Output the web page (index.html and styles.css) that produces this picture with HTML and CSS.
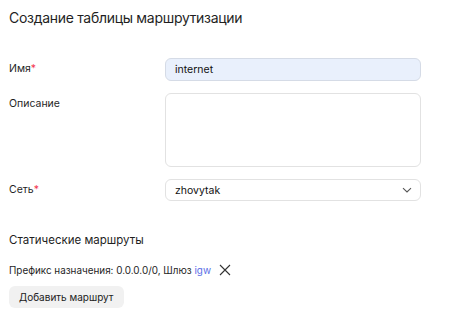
FILE: index.html
```html
<!DOCTYPE html>
<html lang="ru">
<head>
    <meta charset="UTF-8">
    <title>Создание таблицы маршрутизации</title>
    <link rel="stylesheet" href="styles.css">
</head>
<body>
    <div class="page">
        <h2 class="title">Создание таблицы маршрутизации</h2>

        <div class="form">
            <div class="row">
                <label class="label" for="name">Имя<span class="req">*</span></label>
                <input class="input filled" type="text" id="name" value="internet">
            </div>
            <div class="row">
                <label class="label" for="desc">Описание</label>
                <textarea class="input area" id="desc"></textarea>
            </div>
            <div class="row">
                <label class="label" for="net">Сеть<span class="req">*</span></label>
                <div class="input select" id="net">
                    <span>zhovytak</span>
                    <svg width="12" height="12" viewBox="0 0 12 12"><path d="M2 4.2 6 8l4-3.8" fill="none" stroke="#555" stroke-width="1.1"/></svg>
                </div>
            </div>
        </div>

        <h3 class="subtitle">Статические маршруты</h3>
        <div class="route">
            <span>Префикс назначения: 0.0.0.0/0, Шлюз <a href="#" class="link">igw</a></span>
            <svg class="remove" width="12" height="12" viewBox="0 0 12 12"><path d="M1 1l10 10M11 1 1 11" stroke="#333" stroke-width="1.1"/></svg>
        </div>
        <button class="btn" type="button">Добавить маршрут</button>
    </div>
</body>
</html>
```

FILE: styles.css
```css
body {
    margin: 0;
    font-family: "Inter", "Noto Sans", Arial, sans-serif;
    color: #1f1f1f;
    background: white;
}
.page {
    padding: 9px 9px;
}
.title {
    margin: 0 0 31px 0;
    font-size: 14px;
    letter-spacing: -0.3px;
    font-weight: 400;
    line-height: 18px;
}
.form {
    display: flex;
    flex-direction: column;
    gap: 12px;
}
.row {
    display: grid;
    grid-template-columns: 156px 256px;
    align-items: start;
}
.label {
    font-size: 10.5px;
    line-height: 13px;
    padding-top: 4px;
}
.req {
    color: #f3374e;
}
.input {
    box-sizing: border-box;
    width: 256px;
    height: 23px;
    border: 1px solid #e2e2e2;
    border-radius: 6px;
    padding: 0 9px;
    font-family: inherit;
    font-size: 10.5px;
    color: #111;
    background: white;
    margin: 0;
}
.filled {
    background: #e9f0fc;
    border-color: #d5dbe6;
}
.area {
    height: 74px;
    resize: none;
    display: block;
}
.select {
    display: flex;
    align-items: center;
    justify-content: space-between;
    height: 22px;
    padding-right: 7px;
}
.subtitle {
    margin: 31px 0 15px 0;
    font-size: 11.5px;
    font-weight: 400;
    line-height: 16px;
}
.route {
    display: flex;
    align-items: center;
    gap: 8px;
    height: 14px;
    font-size: 9.9px;
    line-height: 14px;
}
.link {
    color: #5a6ee6;
    text-decoration: none;
}
.remove {
    display: block;
}
.btn {
    display: block;
    margin-top: 9px;
    height: 22px;
    padding: 0 10px;
    border: none;
    border-radius: 6px;
    background: #f1f1f1;
    font-family: inherit;
    font-size: 10px;
    color: #222;
}
```
